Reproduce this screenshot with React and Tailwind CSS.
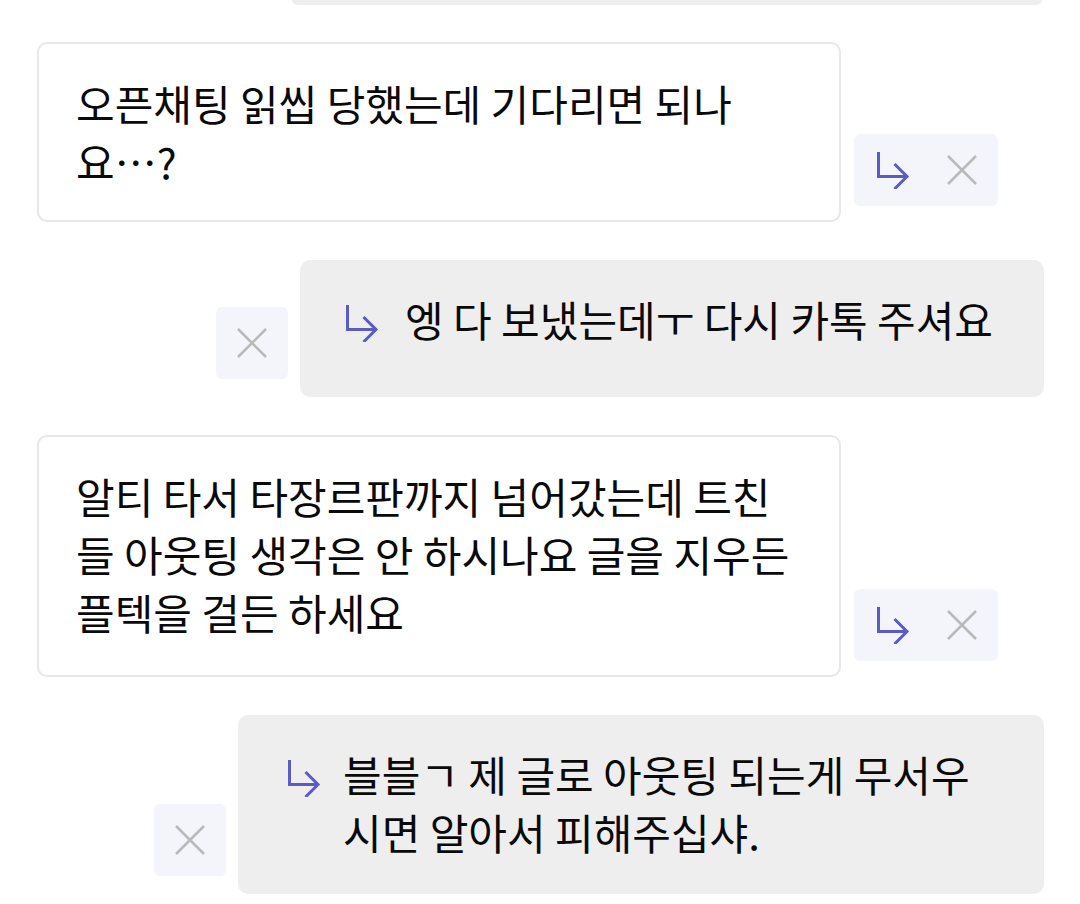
import React from "react";

const ReplyArrow = ({ className = "" }) => (
  <svg
    viewBox="0 0 34 38"
    width="34"
    height="38"
    fill="none"
    stroke="#5b5bc6"
    strokeWidth="3"
    strokeLinejoin="miter"
    className={className}
  >
    <path d="M2.5 1V25.5H31" />
    <path d="M18.5 13L31 25.5L18.5 38" />
  </svg>
);

const CloseX = () => (
  <svg viewBox="0 0 30 30" width="30" height="30" stroke="#b9b9b9" strokeWidth="2.5">
    <path d="M1 1L29 29M29 1L1 29" />
  </svg>
);

const ActionBox = () => (
  <div className="flex h-[72px] w-[144px] shrink-0 items-center justify-between rounded-md bg-[#f4f4fb] pl-[22px] pr-[21px] mb-[16px]">
    <ReplyArrow />
    <CloseX />
  </div>
);

const CloseBox = () => (
  <div className="flex h-[72px] w-[72px] shrink-0 items-center justify-center rounded-md bg-[#f4f4fb] mb-[18px]">
    <CloseX />
  </div>
);

// lines are kept as in the screenshot so the wrap matches
const Lines = ({ lines }) => (
  <div className="text-[42px] leading-[58px] text-[#0a0a0a]">
    {lines.map((l, i) => (
      <div key={i} className="whitespace-nowrap">
        {l}
      </div>
    ))}
  </div>
);

const Incoming = ({ lines, className = "" }) => (
  <div className="flex items-end gap-[13px]">
    <div className={`w-[804px] rounded-[10px] border-2 border-[#e7e7e7] bg-white pt-[30px] pl-[37px] pr-[35px] ${className}`}>
      <Lines lines={lines} />
    </div>
    <ActionBox />
  </div>
);

const Outgoing = ({ lines, className = "" }) => (
  <div className="flex items-end justify-end gap-[12px]">
    <CloseBox />
    <div
      className={`flex items-start rounded-[10px] bg-[#eeeeee] pt-[30px] pb-[33px] pr-[37px] ${className}`}
    >
      <div className="flex h-[58px] shrink-0 items-center pt-[8px]">
        <ReplyArrow />
      </div>
      <Lines lines={lines} />
    </div>
  </div>
);

export default function App() {
  return (
    <div
      className="h-[904px] w-[1080px] overflow-hidden bg-white"
      style={{ fontFamily: '"Noto Sans CJK KR", "Noto Sans", sans-serif' }}
    >
      {/* tail of the previous message */}
      <div className="ml-[292px] mr-[38px] h-[5px] rounded-b-[10px] bg-[#eeeeee]" />

      <div className="flex flex-col gap-[38px] pl-[37px] pr-[36px] pt-[37px]">
        <Incoming lines={["오픈채팅 읽씹 당했는데 기다리면 되나", "요…?"]} className="pb-[30px]" />
        <Outgoing
          lines={["엥 다 보냈는데ㅜ 다시 카톡 주셔요"]}
          className="min-h-[137px] w-[744px] gap-[26px] pl-[45px]"
        />
        <Incoming
          lines={[
            "알티 타서 타장르판까지 넘어갔는데 트친",
            "들 아웃팅 생각은 안 하시나요 글을 지우든",
            "플텍을 걸든 하세요",
          ]}
          className="pb-[34px]"
        />
        <Outgoing
          lines={["블블ㄱ 제 글로 아웃팅 되는게 무서우", "시면 알아서 피해주십샤."]}
          className="w-[806px] gap-[22px] pl-[49px]"
        />
      </div>
    </div>
  );
}
